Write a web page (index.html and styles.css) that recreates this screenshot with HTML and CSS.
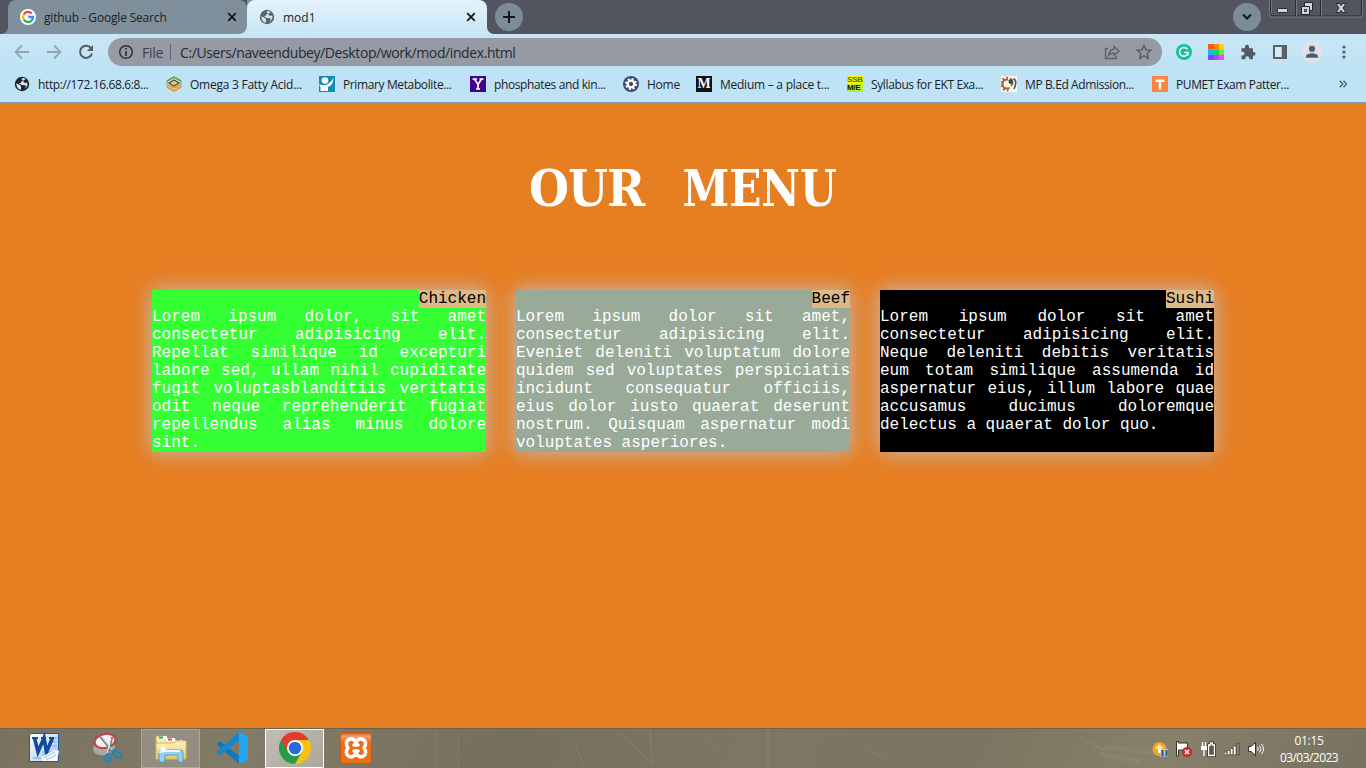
FILE: index.html
```html
<!DOCTYPE html>
<html lang="en">
<head>
<meta charset="utf-8">
<title>mod1</title>
<link rel="stylesheet" href="styles.css">
</head>
<body>
<svg width="0" height="0" class="defs">
  <defs>
    <symbol id="globe" viewBox="0 0 16 16"><circle cx="8" cy="8" r="7.2" fill="currentColor"/><path d="M2.4 7.2 6 9l1 1.4v3.3C4.500 13.500 2.300 11 2.400 7.200ZM7.300 2.500 10 2l1.500 1-1.500 1.500-2 .5-1.500 2H5L7.500 9l3.500.2 1 1.300-1.500 2.300c2.500-1.300 3.500-4 2.700-6.300L11 7 9.500 5.700" fill="#cfe8f5"/></symbol>
    <symbol id="close" viewBox="0 0 10 10"><path d="m1.200 1.200 7.600 7.600M8.800 1.200 1.200 8.800" stroke="#15171a" stroke-width="1.8"/></symbol>
    <linearGradient id="word" x2="1" y2="1"><stop stop-color="#fff"/><stop offset="1" stop-color="#9fc7f3"/></linearGradient>
    <linearGradient id="folder" x2="0" y2="1"><stop stop-color="#fff5bd"/><stop offset="1" stop-color="#e6c669"/></linearGradient>
    <linearGradient id="xampp" x2="0" y2="1"><stop stop-color="#c84d0c"/><stop offset=".12" stop-color="#f7a276"/><stop offset=".3" stop-color="#ed6d1c"/><stop offset="1" stop-color="#f06d14"/></linearGradient>
  </defs>
</svg>

<header class="browser">
  <div class="tabstrip">
    <div class="edge"><i></i></div>
    <div class="tab-slot"><div class="tab">
      <svg class="i16" viewBox="0 0 16 16"><circle cx="8" cy="8" r="8" fill="#fff"/><g fill="none" stroke-width="2.300"><path d="M11.700 4.500A5 5 0 0 0 3.700 5.500" stroke="#ea4335"/><path d="M3.700 5.500a5 5 0 0 0 0 5" stroke="#fbbc05"/><path d="M3.700 10.500a5 5 0 0 0 7.600 1.300" stroke="#34a853"/><path d="M11.300 11.800A5 5 0 0 0 13 8H8.200" stroke="#4285f4"/></g></svg>
      <span class="t-google">github - Google Search</span><svg class="x"><use href="#close"/></svg>
    </div></div>
    <div class="tab-slot active-slot"><div class="tab active">
      <svg class="i16 grey"><use href="#globe"/></svg><span>mod1</span><svg class="x"><use href="#close"/></svg>
    </div></div>
    <div class="frame">
      <div class="round"><svg width="14" height="14"><path d="M7 1v12M1 7h12" stroke="#14161b" stroke-width="2"/></svg></div>
      <div class="round search"><svg width="12" height="8"><path d="m2 1.500 4 4 4-4" fill="none" stroke="#14161b" stroke-width="2"/></svg></div>
      <svg class="winbtns" width="94" height="18" viewBox="0 0 94 18"><path d="M1.500 0v13a3 3 0 0 0 3 3h85a3 3 0 0 0 3-3V0" fill="none" stroke="#292b31"/><path d="M.5 0v14a3 3 0 0 0 3 3h87a3 3 0 0 0 3-3V0" fill="none" stroke="#747780"/><path d="M26.500 0v16M51.500 0v16" stroke="#292b31"/><path d="M27.500 0v16M52.500 0v16M2.500 0v14" stroke="#747780"/>
        <rect x="8.500" y="8.500" width="10" height="4" rx="1" fill="#d3d4d6" stroke="#24262b"/><path d="M35.500 2.500h8v8h-3v4h-8v-8h3z" fill="#d3d4d6" stroke="#24262b"/><path d="M35.500 6.500h5v4M35.500 9.500h2v2h-2z" fill="none" stroke="#24262b"/><path d="M67 3.500h3.500L72 5.700l1.500-2.200H77L74 8l3 4.500h-3.500L72 10.300l-1.500 2.200H67L70 8z" fill="#d3d4d6" stroke="#24262b"/></svg>
    </div>
  </div>

  <div class="toolbar">
    <svg class="nav" viewBox="0 0 16 16"><path d="M15 8H2M8 1.500 1.500 8 8 14.500" fill="none" stroke="#93a5b0" stroke-width="1.800"/></svg>
    <svg class="nav" viewBox="0 0 16 16"><path d="M1 8h13M8 1.500 14.500 8 8 14.500" fill="none" stroke="#93a5b0" stroke-width="1.800"/></svg>
    <svg class="nav" viewBox="0 0 16 16"><path d="M13.300 4.500A6.100 6.100 0 1 0 14 9.500" fill="none" stroke="#555b61" stroke-width="2"/><path d="M15 1v6H9z" fill="#555b61"/></svg>
    <div class="address">
      <svg width="16" height="16"><circle cx="8" cy="8" r="6.300" fill="none" stroke="#303237" stroke-width="1.500"/><path d="M8 7v5M8 4v1.700" stroke="#303237" stroke-width="1.700"/></svg>
      <span class="file">File</span><i class="bar"></i><span class="url">C:/Users/naveendubey/Desktop/work/mod/index.html</span>
      <svg class="share" width="16" height="16" fill="none" stroke="#5c5f66" stroke-width="1.300"><path d="M4 4.500H1.500v10h11V12"/><path d="M10 2.500 15 7l-5 4.500V9C7.500 9 6 9.800 4.500 11.500 5 8 7 5.300 10 5z"/></svg>
      <svg width="16" height="16"><path d="m8 1.500 2 4.300 4.700.5-3.500 3.200 1 4.700L8 11.800l-4.200 2.400 1-4.700L1.300 6.300 6 5.800z" fill="none" stroke="#5c5f66" stroke-width="1.500"/></svg>
    </div>
    <svg class="ext" viewBox="0 0 16 16"><circle cx="8" cy="8" r="8" fill="#15c39a"/><path d="M11.500 5.300A4.400 4.400 0 1 0 12 9.500M8.300 8.500H12v3" fill="none" stroke="#fff" stroke-width="1.500"/></svg>
    <svg class="ext" viewBox="0 0 16 16"><path d="M0 0h6v5.500H0z" fill="#ff5a0c"/><path d="M6 0h5v5.500H6z" fill="#ff8a00"/><path d="M11 0h5v5.500h-5z" fill="#ffd400"/><path d="M0 5.500h6V11H0z" fill="#13b5ff"/><path d="M6 5.500h5V11H6z" fill="#14cd66"/><path d="M11 5.500h5V11h-5z" fill="#78df50"/><path d="M0 11h6v5H0z" fill="#8547ff"/><path d="M6 11h5v5H6z" fill="#bd43ff"/><path d="M11 11h5v5h-5z" fill="#ff42f7"/></svg>
    <svg class="ext" viewBox="0 0 16 16"><path d="M1.500 4.200h3.700C4.500 2 5.500.8 7 .8s2.500 1.200 1.900 3.400h4v3.900c1.500-.5 2.600.3 2.600 1.700s-1.100 2.200-2.600 1.700v3.800H9.300c.5-1.900-.4-3-1.900-3s-2.300 1.100-1.900 3h-4v-3.800c2 .3 3-.5 3-1.900s-1-2.100-3-1.800z" fill="#555a60"/></svg>
    <svg class="ext" viewBox="0 0 16 16"><path d="M1 1h14v14H1zM3 3v10h6.500V3z" fill="#5b5f65" fill-rule="evenodd"/><path d="M3 3h6.500v10H3z" fill="#d5edf8"/></svg>
    <svg class="avatar" viewBox="0 0 22 22"><circle cx="11" cy="11" r="11" fill="#dde1e8"/><circle cx="11" cy="7.800" r="3.100" fill="#515c6e"/><path d="M5 16.700v-1.500c0-2 3.500-3 6-3s6 1 6 3v1.500z" fill="#515c6e"/></svg>
    <svg class="dots" width="4" height="14"><g fill="#555a60"><circle cx="2" cy="2" r="1.600"/><circle cx="2" cy="7" r="1.600"/><circle cx="2" cy="12" r="1.600"/></g></svg>
  </div>

  <nav class="bookmarks">
    <a><svg class="i16 black"><use href="#globe"/></svg><span class="b1">http://172.16.68.6:8...</span></a>
    <a><svg class="i16" viewBox="0 0 16 16" fill="none"><path d="m1 5 7-3.800L15 5" stroke="#689b2e" stroke-width="1.500"/><path d="M1 5v6M15 5v6" stroke="#9a9b45"/><path d="m1 11 7 4 7-4M2 9l6 3 6-3" stroke="#ee9624" stroke-width="1.600"/><path d="m3 7 5-3 5 3-5 3z" fill="#d8d85c" stroke="#574553" stroke-width="1.300"/></svg><span class="b2">Omega 3 Fatty Acid...</span></a>
    <a><svg class="i16" viewBox="0 0 16 16"><path d="M0 0h16v16H0z" fill="#1689b5"/><circle cx="6" cy="4.500" r="3.300" fill="#fff"/><path d="M0 8c5 3 10 1 14.500-6C14 8 12 10 9 11v4H1.500v-4z" fill="#fff"/></svg><span class="b3">Primary Metabolite...</span></a>
    <a><svg class="i16" viewBox="0 0 16 16"><path d="M0 0h16v16H0z" fill="#41058b"/><path d="M2.500 3H7M9.500 3h4M4.500 3 8 8.500 11.500 3M8 8v5M6 13h4" fill="none" stroke="#fff" stroke-width="1.700"/></svg><span class="b4">phosphates and kin...</span></a>
    <a><svg class="i16" viewBox="0 0 16 16"><circle cx="8" cy="8" r="8" fill="#3f4a70"/><circle cx="8" cy="8" r="5" fill="none" stroke="#fff" stroke-width="2" stroke-dasharray="2 1.927"/><circle cx="8" cy="8" r="3.300" fill="none" stroke="#fff" stroke-width="2.300"/></svg><span class="b5">Home</span></a>
    <a><b class="medium">M</b><span class="b6">Medium – a place t...</span></a>
    <a><b class="ssb"><em>SSB</em><em>M/E</em></b><span class="b7">Syllabus for EKT Exa...</span></a>
    <a><svg class="i16" viewBox="0 0 16 16"><path d="M0 0h16v16H0z" fill="#fbf7f2"/><circle cx="6" cy="8" r="4.500" fill="none" stroke="#b65626" stroke-width="2"/><circle cx="6" cy="8" r="6.300" fill="none" stroke="#b65626" stroke-width="1.800" stroke-dasharray="2 2"/><path d="M7 3h9v11H9z" fill="#fbf7f2"/><path d="M8 5c3-4 5 2 2 5M12 3c4 0 3 6 1 10" fill="none" stroke="#55584f" stroke-width="1.600"/><circle cx="9.500" cy="6" r="2" fill="#315238"/></svg><span class="b8">MP B.Ed Admission...</span></a>
    <a><svg class="i16" viewBox="0 0 16 16"><path d="M0 0h16v16H0z" fill="#ff8240"/><path d="M3.500 4.700h9M8 4v9.500" stroke="#fff" stroke-width="2.400"/></svg><span class="b9">PUMET Exam Patter...</span></a>
    <svg class="more" width="8" height="8"><path d="m.8.800 3 3.200-3 3.200M4.500.800l3 3.200-3 3.200" fill="none" stroke="#555a60" stroke-width="1.300"/></svg>
  </nav>
</header>

<main>
  <h1><span class="our">OUR</span> <span class="menu-word">MENU</span></h1>
  <section class="menu">
    <article class="card chicken"><h2>Chicken</h2><p>Lorem ipsum dolor, sit amet consectetur adipisicing elit. Repellat similique id excepturi labore sed, ullam nihil cupiditate fugit voluptasblanditiis veritatis odit neque reprehenderit fugiat repellendus alias minus dolore sint.</p></article>
    <article class="card beef"><h2>Beef</h2><p>Lorem ipsum dolor sit amet, consectetur adipisicing elit. Eveniet deleniti voluptatum dolore quidem sed voluptates perspiciatis incidunt consequatur officiis, eius dolor iusto quaerat deserunt nostrum. Quisquam aspernatur modi voluptates asperiores.</p></article>
    <article class="card sushi"><h2>Sushi</h2><p>Lorem ipsum dolor sit amet consectetur adipisicing elit. Neque deleniti debitis veritatis eum totam similique assumenda id aspernatur eius, illum labore quae accusamus ducimus doloremque delectus a quaerat dolor quo.</p></article>
  </section>
</main>

<footer class="taskbar">
  <svg class="texture" width="1366" height="39" fill="none" stroke="#c9c3a5" stroke-opacity=".18"><path d="M436 0v39M458 4v35M615 0l38 35M650 0l2 36M575 15l8 20M702 8l15 14M768 0v39M865 18l20 12M1080 8l25 14"/><path d="M1100 25l40 8M1105 18l55 6" stroke-width="5" stroke-opacity=".08"/></svg>
  <div class="app"><svg width="32" height="32" viewBox="0 0 32 32"><path d="M3 1.500h27.500v28H1.500V3z" fill="url(#word)" stroke="#23569d"/><path d="M14 20h15M14 23h15M5 26h24M24 6h5M24 10h5M24 14h5" stroke="#6fa0d8"/><path d="m6.500 6 3.500 14 6-14 2.500 14L24.500 6" fill="none" stroke="#124b9c" stroke-width="3.600"/><path d="M4 6h6M13 6h5M21 6h5" stroke="#124b9c" stroke-width="2"/><path d="m13 25 14-7 4 1-2 10H14z" fill="#f4f8fc"/><path d="m15 26 12-6M18 28l10-5" stroke="#aac2de"/></svg></div>
  <div class="app"><svg width="32" height="32" viewBox="0 0 32 32"><ellipse cx="12" cy="16" rx="11" ry="7" fill="#aaa9a5" transform="rotate(-10 12 16)"/><ellipse cx="13" cy="9" rx="10.500" ry="7" fill="#f3f3f3" stroke="#c44042" stroke-width="2" transform="rotate(-12 13 9)"/><path d="m8 4 13 16M20 5l-4 17" stroke="#757d83" stroke-width="2.500"/><path d="m9 4 12 15M19 6l-4 16" stroke="#f2f5f6"/><g fill="none" stroke="#2284bd" stroke-width="2.200"><ellipse cx="16" cy="26" rx="2.600" ry="4.200" transform="rotate(15 16 26)"/><ellipse cx="25" cy="22" rx="2.600" ry="5" transform="rotate(-55 25 22)"/></g></svg></div>
  <div class="app open"><svg width="34" height="32" viewBox="0 0 34 32"><path d="M2 4h9l1 3h9l1 3h9v17H2z" fill="url(#folder)" stroke="#bea253"/><path d="M5 4h8v3H5M12 6h9v3h-9M21 8h8v3h-8" fill="#fff"/><path d="M5 4.500h4v2H5z" fill="#18a931"/><path d="M14 6.500h4v2h-4z" fill="#dd4535"/><path d="M22 8.500h4v2h-4z" fill="#278bd1"/><path d="M2 11h18l2-2h10v18H2z" fill="url(#folder)" stroke="#d2b668"/><path d="M5 30v-9q0-3 3-3h18q3 0 3 3v9h-5v-7H11v7z" fill="#93d5ef" stroke="#4d9fc4"/><path d="M6 21q0-2 2-2h18" fill="none" stroke="#e4fbff" stroke-width="2"/><path d="m9 12 1 4 4 1-4 1-1 4-1-4-4-1 4-1z" fill="#fff"/></svg></div>
  <div class="app"><svg width="32" height="32" viewBox="0 0 32 32"><path d="m23 0 9 4v24l-9 4L2 13.500q-2-2 0-3l2-1.500 19 14z" fill="#0f79bd"/><path d="M23 0v9L4 23.500l-3-2q-1-1.500 1-3z" fill="#1588cc"/><path d="m23 0 9 4v24l-9 4V9L13 16l10 7v9" fill="#27a6ee"/><path d="M13.500 16 23 9v14z" fill="#7f7965"/></svg></div>
  <div class="app open current"><svg width="32" height="32" viewBox="0 0 32 32"><circle cx="16" cy="16" r="16" fill="#fbc116"/><path d="M2.140 8A16 16 0 0 0 16 32l6.900-12L16 16z" fill="#269b48"/><path d="M2.140 8A16 16 0 0 1 29.860 8H16L9.070 20z" fill="#e33b2e"/><circle cx="16" cy="16" r="8" fill="#fff"/><circle cx="16" cy="16" r="6.300" fill="#286ddd"/></svg></div>
  <div class="app"><svg width="32" height="32" viewBox="0 0 32 32"><rect x=".5" y=".5" width="31" height="31" rx="3" fill="url(#xampp)" stroke="#c75915"/><path d="M16 11c-1-3.500-4-5-7-3.500-3.500 2-3 6-1 8.500-2 2.500-2.500 6 .5 8s6.500 0 7.500-3.500c1 3.500 4.500 5.500 7.500 3.500s2.500-5.500.5-8c2-2.500 2.500-6.500-1-8.500-3-1.500-6 0-7 3.500zM14 13h4M14 19h4" fill="none" stroke="#fff" stroke-width="3.600" stroke-linecap="round" stroke-linejoin="round"/></svg></div>
  <div class="tray">
    <svg viewBox="0 0 16 16"><circle cx="7.500" cy="8" r="7" fill="#f6a223"/><path d="M7.500 3 3 7.500h3V12h3V7.500h3z" fill="#fff3bd"/><path d="M9 8.500h3V16H9zM13 8.500h3V16h-3z" fill="#2d5da4" stroke="#cee2ef" stroke-width=".7"/></svg>
    <svg viewBox="0 0 16 16"><path d="M.5.500h2V2h9v7h-9v6h-2z" fill="#fff" stroke="#333025"/><circle cx="11" cy="11" r="4.800" fill="#d72b2b" stroke="#8b1f1b" stroke-width=".5"/><path d="m9 9 4 4m0-4-4 4" stroke="#fff" stroke-width="1.500"/></svg>
    <svg viewBox="0 0 16 16"><path d="M7.500 3h2V1h4v2h2v12.500h-8z" fill="#444235" stroke="#292720"/><path d="M8.500 4h2V2h2v2h2v10.500h-6z" fill="#5d5a49" stroke="#fff" stroke-width="1.300"/><path d="M2.500 1v4M5.500 1v4M4 8v7" stroke="#fff" stroke-width="1.300"/><path d="M1 5h6v4H1z" fill="#fff"/></svg>
    <svg viewBox="0 0 16 16" stroke="#3a382f" stroke-width=".6"><path d="M.3 11.200h2.700v2.600H.3zM3.300 9.500H6v4.300H3.300zM6.300 7.500H9v6.300H6.300zM9.300 5H12v8.800H9.300z" fill="#fff"/><path d="M12.500 2.200h2.800v11.600h-2.800z" fill="#89877c"/></svg>
    <svg viewBox="0 0 16 16"><path d="M.5 5.500H3L7.500 1.500v13L3 10.500H.5z" fill="#fff" stroke="#333025"/><path d="M9.500 6q1.500 2 0 4M11.500 4.500q3 3.500 0 7M13.500 3q4 5 0 10" fill="none" stroke="#f3f3ef"/></svg>
  </div>
  <div class="clock"><span>01:15</span><span class="date">03/03/2023</span></div>
</footer>
</body>
</html>
```
FILE: styles.css
```css
* { box-sizing: border-box; }
body { margin: 0; width: 1366px; height: 768px; overflow: hidden; display: flex; flex-direction: column; background: #e67e22; font: 12px "Open Sans", "Noto Sans", sans-serif; }
.defs { position: absolute; }
svg { flex: none; display: block; }
.browser { height: 103px; border-bottom: 1px solid #8798a4; background: linear-gradient(#e3f3fb 0, #c9e6f7 34px, #bee3f4 68px, #bee3f4 100%); color: #1c2128; }
.tabstrip { height: 34px; display: flex; }
.edge { width: 8px; background: #7f909c; }
.edge i { display: block; height: 34px; background: #52555f; border-radius: 0 0 7px 0; }
.tab-slot { width: 239px; background: linear-gradient(#52555f 50%, #c9e6f7 50%); }
.active-slot { width: 240px; background: linear-gradient(90deg, #7f909c 50%, #52555f 50%) 0 0 / 100% 9px no-repeat; }
.tab { height: 34px; border-radius: 8px 8px 8px 0; background: #7f909c; display: flex; align-items: center; gap: 8px; padding: 0 10px 0 12px; }
.active { border-radius: 8px 8px 0 0; background: linear-gradient(#e3f3fb, #c9e6f7); padding-right: 11px; }
.t-google { letter-spacing: -.18px; }
.tab .x { width: 10px; height: 10px; margin-left: auto; }
.i16 { width: 16px; height: 16px; }
.grey { color: #5b646b; }
.black { color: #20242a; }
.frame { flex: 1; display: flex; background: #52555f; border-radius: 0 0 0 7px; padding-left: 8px; }
.round { width: 28px; height: 28px; margin-top: 3px; border-radius: 50%; background: #7b8c98; display: grid; place-items: center; }
.search { margin-left: auto; }
.winbtns { margin: 0 3px 0 8px; }
.toolbar { height: 34px; padding: 4px 19px 2px 14px; display: flex; align-items: center; }
.nav { width: 16px; height: 16px; margin-right: 16px; }
.nav:nth-child(3) { margin-right: 14px; }
.address { width: 1054px; height: 28px; border-radius: 14px; background: #969aa4; display: flex; align-items: center; padding: 0 10px; font-size: 14px; color: #272a2f; }
.file { margin-left: 8px; letter-spacing: -.3px; color: #3d4148; }
.url { letter-spacing: -.4px; }
.bar { width: 1px; height: 16px; margin: 0 9px 0 7px; background: #5f636b; }
.share { margin-left: auto; margin-right: 16px; }
.ext { width: 16px; height: 16px; margin-right: 16px; }
.address + .ext { margin-left: 14px; }
.avatar { width: 22px; height: 22px; margin: 0 19px 0 -3px; }
.bookmarks { height: 34px; padding: 0 19px 2px 14px; display: grid; align-items: center; grid-template-columns: 152px 153px 151px 153px 73px 151px 154px 151px 1fr auto; }
.bookmarks a { display: flex; align-items: center; gap: 8px; white-space: nowrap; }
.b1, .b3, .b4, .b7, .b8, .b9 { letter-spacing: -.38px; }
.b2, .b5, .b6 { letter-spacing: -.25px; }
.medium { width: 16px; height: 16px; background: #111; color: #fff; font: bold 14px/16px "Liberation Serif", serif; text-align: center; }
.ssb { width: 16px; height: 16px; background: linear-gradient(#fff200 50%, #b9ef25 50%); font: bold 8px/8px "Liberation Sans", sans-serif; color: #278a28; }
.ssb em { display: block; font-style: normal; letter-spacing: -.3px; }
.ssb em + em { color: #111; }
main { height: 625px; font-family: "Liberation Mono", "Courier New", monospace; }
h1 { margin: 49px 0 0; height: 72px; padding: 0 529px; display: flex; justify-content: space-between; font: bold 51px/73px "DejaVu Serif Condensed", "DejaVu Serif", serif; font-stretch: condensed; color: #fff; white-space: nowrap; }
.our { letter-spacing: -1px; }
.menu-word { transform: scaleX(.92); transform-origin: right; }
.menu { display: flex; gap: 30px; padding: 66px 152px 0; }
.card { width: 334px; height: 162px; display: flex; flex-direction: column; font-size: 16px; line-height: 18px; color: #fff; box-shadow: 0 0 20px #c0c0c0; }
.card h2 { margin: 0; align-self: flex-end; font-size: 16px; font-weight: 400; background: #deb887; color: #000; }
.card p { margin: 0; text-align: justify; }
.chicken { background: #33ff33; }
.beef { background: #99aa99; }
.sushi { background: #000; }
.taskbar { position: relative; height: 40px; display: flex; align-items: center; gap: 3px; padding: 0 26px 0 16px; border-top: 1px solid #68664f; background: linear-gradient(115deg, #79725f, #817b68 18%, #756f5d 37%, #7c7662 55%, #7a7460 70%, #87806b 85%, #777160); }
.texture { position: absolute; left: 0; top: 0; }
.app { position: relative; width: 59px; height: 39px; padding-bottom: 1px; display: grid; place-items: center; }
.app:nth-of-type(1) svg { margin-right: 3px; }
.open { border: 1px solid #aaa69a; background: #938e80; }
.app.open { margin-left: 1px; margin-right: -1px; }
.current { border-color: #fff; background: linear-gradient(135deg, #bfbdb5, #aaa79c); }
.tray { margin-left: auto; display: flex; gap: 8px; position: relative; left: 1px; }
.tray svg { width: 16px; height: 16px; }
.clock { width: 60px; margin-left: 14px; display: grid; line-height: 17px; text-align: center; color: #fff; white-space: nowrap; position: relative; left: -1px; }
.clock span { letter-spacing: -.3px; }
.clock .date { letter-spacing: -.55px; }
```
